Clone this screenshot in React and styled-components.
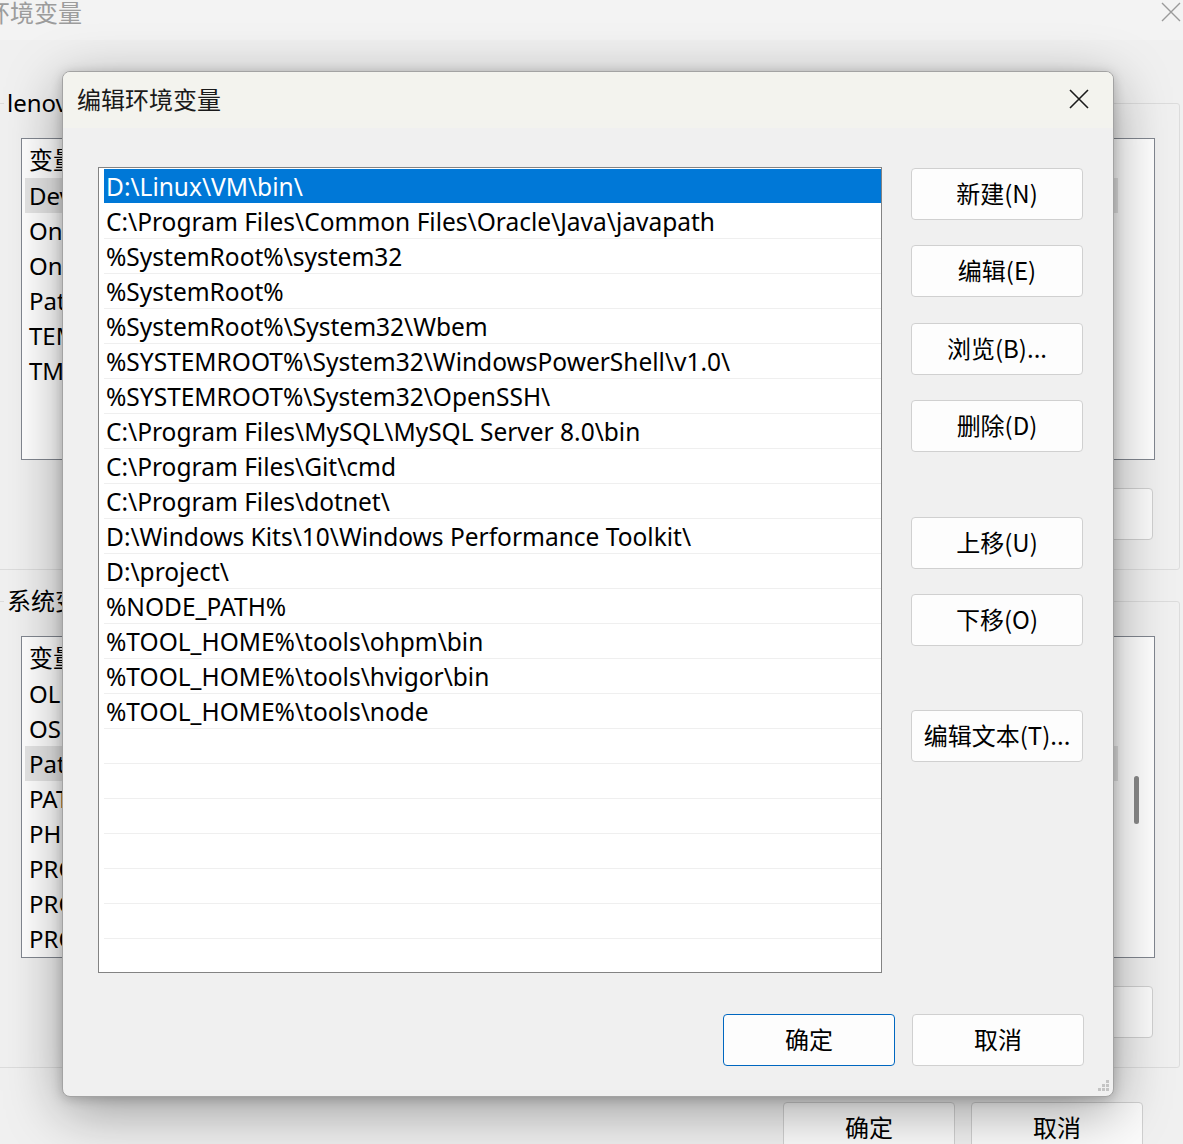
import React from "react";
import styled, { createGlobalStyle } from "styled-components";

const GlobalStyle = createGlobalStyle`
  html, body {
    margin: 0;
    padding: 0;
    background: #f0f0f0;
    overflow: hidden;
  }
  * {
    box-sizing: border-box;
  }
`;

const FONT = `"Noto Sans", "Noto Sans CJK SC", sans-serif`;
const CJK = `"Noto Sans CJK SC", "Noto Sans", sans-serif`;

// ---- data ----
const paths = [
  "D:\\Linux\\VM\\bin\\",
  "C:\\Program Files\\Common Files\\Oracle\\Java\\javapath",
  "%SystemRoot%\\system32",
  "%SystemRoot%",
  "%SystemRoot%\\System32\\Wbem",
  "%SYSTEMROOT%\\System32\\WindowsPowerShell\\v1.0\\",
  "%SYSTEMROOT%\\System32\\OpenSSH\\",
  "C:\\Program Files\\MySQL\\MySQL Server 8.0\\bin",
  "C:\\Program Files\\Git\\cmd",
  "C:\\Program Files\\dotnet\\",
  "D:\\Windows Kits\\10\\Windows Performance Toolkit\\",
  "D:\\project\\",
  "%NODE_PATH%",
  "%TOOL_HOME%\\tools\\ohpm\\bin",
  "%TOOL_HOME%\\tools\\hvigor\\bin",
  "%TOOL_HOME%\\tools\\node",
];

const userVars = ["DevEco Studio", "OneDrive", "OneDriveConsumer", "Path", "TEMP", "TMP"];
const systemVars = [
  "OLLAMA_MODELS",
  "OS",
  "Path",
  "PATHEXT",
  "PHP_HOME",
  "PROCESSOR_ARCHITECTURE",
  "PROCESSOR_IDENTIFIER",
  "PROCESSOR_LEVEL",
];

// ---- parent window (behind the dialog) ----
const Desktop = styled.div`
  position: relative;
  width: 1183px;
  height: 1144px;
  overflow: hidden;
  background: #f0f0f0;
  font-family: ${FONT};
  color: #000;
`;

const ParentTitle = styled.div`
  height: 40px;
  background: #f3f3f3;
  display: flex;
  align-items: center;
  justify-content: space-between;
`;

const ParentTitleText = styled.span`
  margin-left: -14px;
  font-family: ${CJK};
  font-size: 24px;
  color: #9c9c9c;
  line-height: 28px;
  margin-top: -16px;
`;

const ParentClose = styled.svg`
  width: 22px;
  height: 22px;
  margin-right: 1px;
  margin-top: -16px;
`;

const ParentBody = styled.div`
  display: flex;
  flex-direction: column;
`;

const Group = styled.div`
  margin-top: ${(p) => p.$top}px;
  margin-left: -10px;
  width: 1190px;
  border: 1px solid #dcdcdc;
  border-radius: 3px;
  padding-bottom: 29px;
  display: flex;
  flex-direction: column;
`;

const Legend = styled.span`
  align-self: flex-start;
  margin: -15px 0 0 13px;
  padding: 0 3px;
  background: #f0f0f0;
  font-family: ${FONT};
  font-size: 24px;
  line-height: 28px;
`;

const VarList = styled.div`
  margin: 21px 0 0 30px;
  width: 1134px;
  height: 322px;
  border: 1px solid #828790;
  background: #fff;
  display: flex;
  flex-direction: column;
  overflow: hidden;
  position: relative;
`;

const VarHeader = styled.div`
  height: 39px;
  display: flex;
  align-items: center;
  padding-left: 7px;
  font-family: ${CJK};
  font-size: 24px;
`;

const VarRow = styled.div`
  height: 35px;
  margin-left: 3px;
  width: 1093px;
  padding-left: 4px;
  display: flex;
  align-items: center;
  font-size: 24px;
  background: ${(p) => (p.$active ? "#e5e5e5" : "transparent")};
`;

const ScrollThumb = styled.div`
  position: absolute;
  right: 15px;
  top: 139px;
  width: 5px;
  height: 48px;
  border-radius: 3px;
  background: #8a8a8a;
`;

const GroupButtons = styled.div`
  margin: 28px 26px 0 0;
  display: flex;
  justify-content: flex-end;
  gap: 16px;
`;

const ParentButton = styled.div`
  width: 172px;
  height: 52px;
  border: 1px solid #d0d0d0;
  border-radius: 4px;
  background: #fbfbfb;
  display: flex;
  align-items: center;
  justify-content: center;
  padding-bottom: 3px;
  font-family: ${CJK};
  font-size: 24px;
`;

const ParentFooter = styled.div`
  margin: 34px 40px 0 0;
  display: flex;
  justify-content: flex-end;
  gap: 16px;
`;

// ---- edit dialog ----
const Modal = styled.div`
  position: absolute;
  left: 62px;
  top: 71px;
  width: 1052px;
  height: 1026px;
  border: 1px solid #a3a3a3;
  border-radius: 8px;
  overflow: hidden;
  background: #f0f0f0;
  box-shadow: 0 14px 56px rgba(0, 0, 0, 0.36), 0 2px 12px rgba(0, 0, 0, 0.2);
  display: flex;
  flex-direction: column;
`;

const ModalTitle = styled.div`
  height: 56px;
  flex-shrink: 0;
  background: #f3f3ee;
  display: flex;
  align-items: center;
  justify-content: space-between;
  padding-left: 14px;
`;

const ModalTitleText = styled.span`
  font-family: ${CJK};
  font-size: 24px;
  color: #1a1a1a;
  margin-top: -4px;
`;

const CloseButton = styled.div`
  width: 46px;
  height: 40px;
  margin-right: 11px;
  margin-top: -2px;
  display: flex;
  align-items: center;
  justify-content: center;
`;

const ModalBody = styled.div`
  flex: 1;
  display: flex;
  flex-direction: column;
  padding: 39px 29px 0 35px;
  position: relative;
`;

const TopRow = styled.div`
  display: flex;
  gap: 29px;
`;

const PathList = styled.div`
  width: 784px;
  height: 806px;
  border: 1px solid #838383;
  background: #fff;
  padding: 1px 0 0 5px;
  overflow: hidden;
`;

const PathRow = styled.div`
  height: 35px;
  padding-left: 2px;
  border-bottom: 1px solid ${(p) => (p.$selected ? "#fff" : "#efefef")};
  background: ${(p) => (p.$selected ? "#0078d7" : "#fff")};
  color: ${(p) => (p.$selected ? "#fff" : "#000")};
  font-family: ${FONT};
  font-size: 24.5px;
  line-height: 35px;
  white-space: nowrap;
  &:last-child {
    border-bottom-color: transparent;
  }
`;

const ButtonColumn = styled.div`
  width: 172px;
  display: flex;
  flex-direction: column;
`;

const DialogButton = styled.div`
  width: 172px;
  height: 52px;
  margin-top: ${(p) => p.$gap || 0}px;
  border: 1px solid ${(p) => (p.$primary ? "#0067c0" : "#d0d0d0")};
  border-radius: 4px;
  background: #fdfdfd;
  display: flex;
  align-items: center;
  justify-content: center;
  padding-bottom: 3px;
  font-family: ${CJK};
  font-size: 24px;
  color: #000;
`;

const BottomRow = styled.div`
  margin-top: 41px;
  display: flex;
  justify-content: flex-end;
  gap: 17px;
`;

const Grip = styled.svg`
  position: absolute;
  right: 2px;
  bottom: 2px;
  width: 16px;
  height: 16px;
`;

const sideButtons = [
  { label: "新建(N)", gap: 1 },
  { label: "编辑(E)", gap: 25 },
  { label: "浏览(B)...", gap: 26 },
  { label: "删除(D)", gap: 25 },
  { label: "上移(U)", gap: 65 },
  { label: "下移(O)", gap: 25 },
  { label: "编辑文本(T)...", gap: 64 },
];

const XIcon = ({ color = "#1a1a1a", width = 1.6 }) => (
  <svg width="22" height="22" viewBox="0 0 22 22">
    <path d="M2 2 L20 20 M20 2 L2 20" stroke={color} strokeWidth={width} fill="none" />
  </svg>
);

const App = () => {
  return (
    <Desktop>
      <GlobalStyle />
      <ParentTitle>
        <ParentTitleText>环境变量</ParentTitleText>
        <ParentClose viewBox="0 0 22 22">
          <path d="M2 2 L20 20 M20 2 L2 20" stroke="#9a9a9a" strokeWidth="1.4" fill="none" />
        </ParentClose>
      </ParentTitle>

      <ParentBody>
        <Group $top={63}>
          <Legend>lenovo 的用户变量(U)</Legend>
          <VarList>
            <VarHeader>变量</VarHeader>
            {userVars.map((v, i) => (
              <VarRow key={v} $active={i === 0}>
                {v}
              </VarRow>
            ))}
          </VarList>
          <GroupButtons>
            <ParentButton>新建(N)...</ParentButton>
            <ParentButton>编辑(E)...</ParentButton>
            <ParentButton>删除(D)</ParentButton>
          </GroupButtons>
        </Group>

        <Group $top={31}>
          <Legend>系统变量(S)</Legend>
          <VarList>
            <VarHeader>变量</VarHeader>
            {systemVars.map((v) => (
              <VarRow key={v} $active={v === "Path"}>
                {v}
              </VarRow>
            ))}
            <ScrollThumb />
          </VarList>
          <GroupButtons>
            <ParentButton>新建(W)...</ParentButton>
            <ParentButton>编辑(I)...</ParentButton>
            <ParentButton>删除(L)</ParentButton>
          </GroupButtons>
        </Group>

        <ParentFooter>
          <ParentButton>确定</ParentButton>
          <ParentButton>取消</ParentButton>
        </ParentFooter>
      </ParentBody>

      <Modal>
        <ModalTitle>
          <ModalTitleText>编辑环境变量</ModalTitleText>
          <CloseButton>
            <XIcon />
          </CloseButton>
        </ModalTitle>
        <ModalBody>
          <TopRow>
            <PathList>
              {paths.map((p, i) => (
                <PathRow key={p} $selected={i === 0}>
                  {p}
                </PathRow>
              ))}
              {Array.from({ length: 7 }).map((_, i) => (
                <PathRow key={"empty" + i}>&nbsp;</PathRow>
              ))}
            </PathList>
            <ButtonColumn>
              {sideButtons.map((b) => (
                <DialogButton key={b.label} $gap={b.gap}>
                  {b.label}
                </DialogButton>
              ))}
            </ButtonColumn>
          </TopRow>
          <BottomRow>
            <DialogButton $primary>确定</DialogButton>
            <DialogButton>取消</DialogButton>
          </BottomRow>
          <Grip viewBox="0 0 16 16">
            {[
              [11, 2],
              [7, 6],
              [11, 6],
              [3, 10],
              [7, 10],
              [11, 10],
            ].map(([x, y]) => (
              <rect key={x + "-" + y} x={x} y={y} width="3" height="3" fill="#c4c4c4" />
            ))}
          </Grip>
        </ModalBody>
      </Modal>
    </Desktop>
  );
};

export default App;
